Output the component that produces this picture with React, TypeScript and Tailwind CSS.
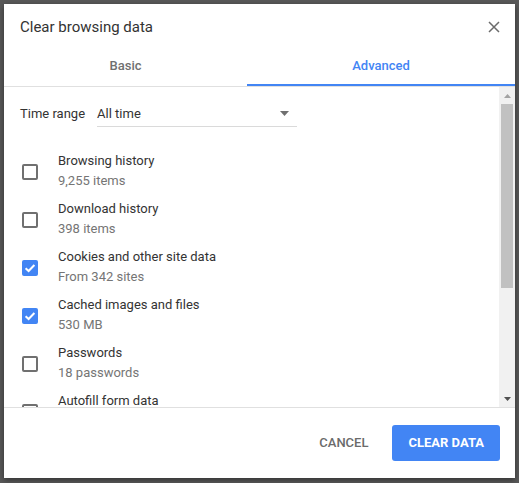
import React from "react";

type Item = { title: string; sub: string; checked: boolean };

const items: Item[] = [
  { title: "Browsing history", sub: "9,255 items", checked: false },
  { title: "Download history", sub: "398 items", checked: false },
  { title: "Cookies and other site data", sub: "From 342 sites", checked: true },
  { title: "Cached images and files", sub: "530 MB", checked: true },
  { title: "Passwords", sub: "18 passwords", checked: false },
  { title: "Autofill form data", sub: "", checked: false },
];

function Checkbox({ checked }: { checked: boolean }) {
  if (checked) {
    return (
      <span className="flex h-4 w-4 shrink-0 items-center justify-center rounded-[2px] bg-[#4285f4]">
        <svg width="14" height="14" viewBox="0 0 14 14" fill="none">
          <path d="M2.6 7.2 5.6 10 11.4 4" stroke="#fff" strokeWidth="2" />
        </svg>
      </span>
    );
  }
  return <span className="block h-4 w-4 shrink-0 rounded-[2px] border-2 border-[#707070]" />;
}

export default function App() {
  return (
    <div className="h-[483px] w-[519px] overflow-hidden bg-[#595959] pl-[4px] pt-[4px] font-['Roboto',sans-serif]">
      <div className="flex h-[474px] w-[511px] flex-col bg-white shadow-[0_2px_6px_rgba(0,0,0,0.45)]">
        {/* header */}
        <div className="flex h-[46px] items-center justify-between pl-4 pr-[15px]">
          <span className="text-[15px] text-[#333]">Clear browsing data</span>
          <svg width="12" height="12" viewBox="0 0 12 12" className="-mt-[1px]">
            <path d="M1 1 11 11M11 1 1 11" stroke="#6b6b6b" strokeWidth="1.5" />
          </svg>
        </div>

        {/* tabs */}
        <div className="flex h-[37px] border-b border-[#e0e0e0]">
          <div className="flex w-[243px] items-center justify-center pb-[4px] text-[13px] font-medium text-[#707070]">
            Basic
          </div>
          <div className="flex flex-1 items-center justify-center border-b-2 border-[#4285f4] pb-[2px] text-[13px] font-medium text-[#4285f4]">
            Advanced
          </div>
        </div>

        {/* scroll area */}
        <div className="flex h-[321px] border-b border-[#e0e0e0]">
          <div className="flex-1 overflow-hidden pl-4">
            <div className="mt-[12px] flex h-[28px] items-center">
              <span className="pt-[2px] text-[13px] text-[#333]">Time range</span>
              <div className="ml-[12px] flex h-[28px] w-[200px] items-center justify-between border-b border-[#dadada] pt-[2px] pr-[8px]">
                <span className="text-[13px] text-[#333]">All time</span>
                <svg width="9" height="5" viewBox="0 0 9 5">
                  <path d="M0 0h9L4.5 5z" fill="#707070" />
                </svg>
              </div>
            </div>
            <div className="mt-[21px] flex flex-col">
              {items.map((it) => (
                <div key={it.title} className="flex h-[48px] shrink-0 items-center">
                  <span className="ml-[2px]">
                    <Checkbox checked={it.checked} />
                  </span>
                  <div className="ml-[20px] -mt-[2px] flex flex-col text-[13px] leading-[20px]">
                    <span className="text-[#333]">{it.title}</span>
                    <span className="text-[#757575]">{it.sub || "\u00a0"}</span>
                  </div>
                </div>
              ))}
            </div>
          </div>

          {/* scrollbar */}
          <div className="flex w-[16px] flex-col items-center bg-[#f1f1f1]">
            <div className="flex h-[17px] w-full items-center justify-center">
              <svg width="7" height="4" viewBox="0 0 7 4">
                <path d="M0 4h7L3.5 0z" fill="#a3a3a3" />
              </svg>
            </div>
            <div className="h-[184px] w-[12px] bg-[#c1c1c1]" />
            <div className="flex-1" />
            <div className="flex h-[17px] w-full items-center justify-center">
              <svg width="7" height="4" viewBox="0 0 7 4">
                <path d="M0 0h7L3.5 4z" fill="#505050" />
              </svg>
            </div>
          </div>
        </div>

        {/* footer */}
        <div className="flex flex-1 items-center justify-end gap-2 pr-[15px]">
          <button className="h-[36px] rounded-[3px] px-4 text-[13px] font-medium text-[#6b6b6b]">
            CANCEL
          </button>
          <button className="h-[36px] rounded-[3px] bg-[#4285f4] px-4 text-[13px] font-bold text-white">
            CLEAR DATA
          </button>
        </div>
      </div>
    </div>
  );
}
